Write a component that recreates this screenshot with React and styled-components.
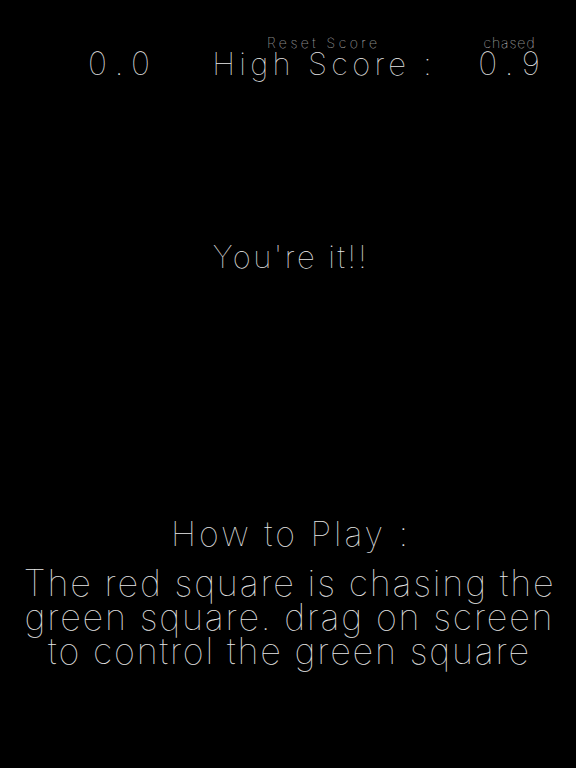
import styled, { createGlobalStyle } from 'styled-components';

const Global = createGlobalStyle`
  html, body {
    margin: 0;
    padding: 0;
    background: #000;
  }
  body {
    font-family: "Inter", "Lato", "Liberation Sans", sans-serif;
    font-weight: 100;
    color: #e6e6e6;
  }
`;

const Screen = styled.div`
  width: 576px;
  height: 768px;
  background: #000;
  display: flex;
  flex-direction: column;
  align-items: center;
  overflow: hidden;
`;

const ScoreBar = styled.div`
  width: 100%;
  display: flex;
  align-items: flex-end;
  padding-top: 36px;
`;

const ScoreColumn = styled.div`
  width: ${props => props.width}px;
  margin-left: ${props => props.offset || 0}px;
  display: flex;
  flex-direction: column;
  align-items: center;
`;

const Caption = styled.div`
  font-size: 14px;
  line-height: 13px;
  letter-spacing: ${props => props.spacing || 0}px;
  padding-left: ${props => props.spacing || 0}px;
`;

const ScoreValue = styled.div`
  font-size: ${props => props.size || 31}px;
  line-height: 29px;
  letter-spacing: ${props => props.spacing || 0}px;
  padding-left: ${props => props.spacing || 0}px;
  white-space: nowrap;
`;

const Status = styled.div`
  margin-top: 161px;
  padding-left: 6px;
  font-size: 31px;
  line-height: 36px;
  letter-spacing: 2.5px;
`;

const HowTo = styled.div`
  margin-top: 241px;
  padding-left: 6px;
  font-size: 34px;
  line-height: 36px;
  letter-spacing: 3px;
`;

const Instructions = styled.p`
  margin: 14px 0 0;
  padding-left: 3px;
  font-size: 36px;
  line-height: 34px;
  letter-spacing: 1.8px;
  text-align: center;
  white-space: nowrap;
`;

const App = () => {
  return (
    <Screen>
      <Global />
      <ScoreBar>
        <ScoreColumn width={120} offset={59}>
          <ScoreValue size={32} spacing={8.5}>0.0</ScoreValue>
        </ScoreColumn>
        <ScoreColumn width={280} offset={3}>
          <Caption spacing={3.5}>Reset Score</Caption>
          <ScoreValue spacing={4.3}>High Score :</ScoreValue>
        </ScoreColumn>
        <ScoreColumn width={100} offset={-3}>
          <Caption spacing={1}>chased</Caption>
          <ScoreValue size={32} spacing={8.5}>0.9</ScoreValue>
        </ScoreColumn>
      </ScoreBar>
      <Status>You're it!!</Status>
      <HowTo>How to Play :</HowTo>
      <Instructions>
        The red square is chasing the
        <br />
        green square. drag on screen
        <br />
        to control the green square
      </Instructions>
    </Screen>
  );
};

export default App;
